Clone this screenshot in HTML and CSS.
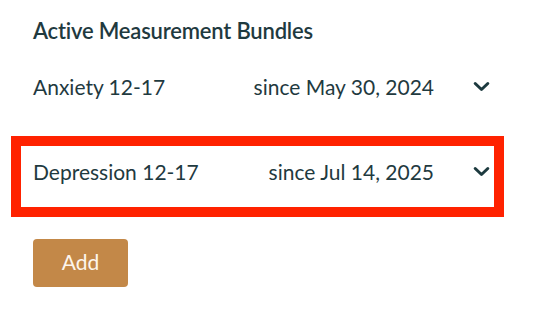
FILE: index.html
```html
<!DOCTYPE html>
<html>
<head>
<meta charset="utf-8">
<link rel="stylesheet" href="styles.css">
</head>
<body>
<div class="panel">
  <h2 class="title">Active Measurement Bundles</h2>
  <div class="row">
    <span class="name">Anxiety 12-17</span>
    <span class="since">since May 30, 2024</span>
    <svg class="chev" width="17" height="11" viewBox="0 0 17 11"><path d="M2.2 2.5 L8.5 8.5 L14.8 2.5" fill="none" stroke="#1d3a3f" stroke-width="3" stroke-linecap="round" stroke-linejoin="round"/></svg>
  </div>
  <div class="row highlighted">
    <span class="name">Depression 12-17</span>
    <span class="since">since Jul 14, 2025</span>
    <svg class="chev" width="17" height="11" viewBox="0 0 17 11"><path d="M2.2 2.5 L8.5 8.5 L14.8 2.5" fill="none" stroke="#1d3a3f" stroke-width="3" stroke-linecap="round" stroke-linejoin="round"/></svg>
  </div>
  <div class="actions">
    <button class="add">Add</button>
  </div>
</div>
</body>
</html>
```
FILE: styles.css
```css
html, body {
  margin: 0;
  padding: 0;
  background: #ffffff;
}
body {
  font-family: Lato, "Open Sans", sans-serif;
  color: #1f3a3f;
}
.panel {
  margin-left: 21px;
  width: 473px;
  padding-top: 18px;
}
.title {
  margin: 0;
  padding-left: 12px;
  font-size: 22px;
  font-weight: 600;
  line-height: 26px;
  letter-spacing: -0.2px;
}
.row {
  box-sizing: border-box;
  display: flex;
  align-items: center;
  height: 61px;
  padding: 0 4px 10px 12px;
  font-size: 21px;
  margin-top: 17px;
}
.row + .row {
  margin-top: 24px;
}
.highlighted {
  outline: 10px solid #ff2200;
}
.name {
  flex: 1;
}
.since {
  margin-right: 39px;
}
.chev {
  display: block;
}
.actions {
  padding-left: 12px;
  margin-top: 32px;
}
.add {
  width: 95px;
  height: 48px;
  border: none;
  border-radius: 4px;
  background: #c38848;
  color: #fdf5ec;
  font-family: Lato, "Open Sans", sans-serif;
  font-size: 21px;
  padding: 0 0 3px;
}
```
